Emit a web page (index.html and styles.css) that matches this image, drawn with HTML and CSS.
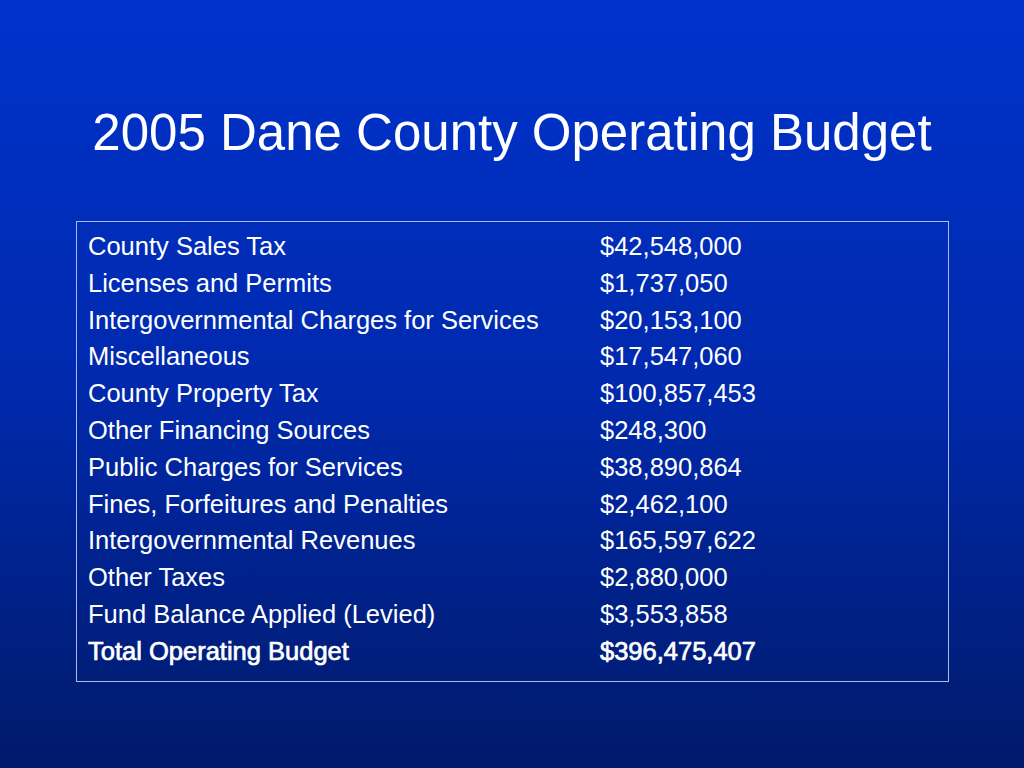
FILE: index.html
```html
<!DOCTYPE html>
<html>
<head>
<meta charset="utf-8">
<link rel="stylesheet" href="styles.css">
</head>
<body>
<div class="slide">
  <h1 class="title">2005 Dane County Operating Budget</h1>
  <div class="box">
    <div class="grid">
      <div class="label">County Sales Tax</div><div class="value">$42,548,000</div>
      <div class="label">Licenses and Permits</div><div class="value">$1,737,050</div>
      <div class="label">Intergovernmental Charges for Services</div><div class="value">$20,153,100</div>
      <div class="label">Miscellaneous</div><div class="value">$17,547,060</div>
      <div class="label">County Property Tax</div><div class="value">$100,857,453</div>
      <div class="label">Other Financing Sources</div><div class="value">$248,300</div>
      <div class="label">Public Charges for Services</div><div class="value">$38,890,864</div>
      <div class="label">Fines, Forfeitures and Penalties</div><div class="value">$2,462,100</div>
      <div class="label">Intergovernmental Revenues</div><div class="value">$165,597,622</div>
      <div class="label">Other Taxes</div><div class="value">$2,880,000</div>
      <div class="label">Fund Balance Applied (Levied)</div><div class="value">$3,553,858</div>
      <div class="label total">Total Operating Budget</div><div class="value total">$396,475,407</div>
    </div>
  </div>
</div>
</body>
</html>
```
FILE: styles.css
```css
html, body {
  margin: 0;
  padding: 0;
}
body {
  width: 1024px;
  height: 768px;
  overflow: hidden;
  background: linear-gradient(to bottom, #0033cc 0%, #0029ad 50%, #001a6a 100%);
  font-family: "Liberation Sans", Arial, sans-serif;
  color: #ffffff;
}
.slide {
  display: flex;
  flex-direction: column;
  padding-top: 103px;
}
.title {
  margin: 0;
  font-weight: normal;
  font-size: 51px;
  line-height: 60px;
  text-align: center;
}
.box {
  margin: 58px 0 0 76px;
  width: 860px;
  border: 1px solid #aebbe8;
  padding: 6px 0 11px 11px;
}
.grid {
  display: grid;
  grid-template-columns: 512px auto;
  font-size: 25.5px;
  line-height: 36.8px;
}
.total {
  -webkit-text-stroke: 0.7px #ffffff;
}
```
